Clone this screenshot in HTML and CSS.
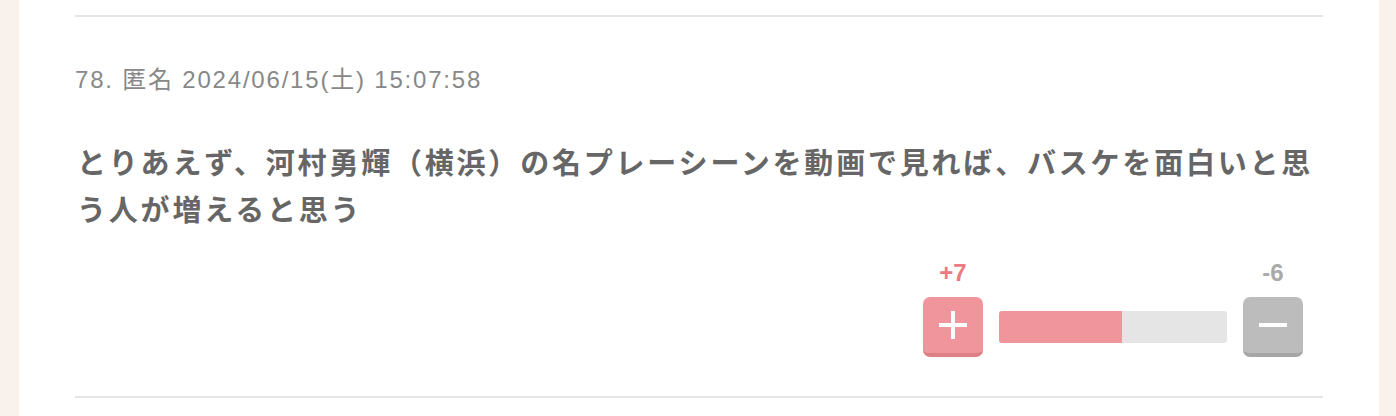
FILE: index.html
```html
<!DOCTYPE html>
<html lang="ja">
<head>
    <meta charset="UTF-8">
    <meta name="viewport" content="width=device-width, initial-scale=1.0">
    <title>コメント</title>
    <link rel="stylesheet" href="styles.css">
</head>
<body>
    <div class="panel">
        <div class="comment">
            <div class="comment-meta">78. 匿名 2024/06/15(土) 15:07:58</div>
            <div class="comment-body">とりあえず、河村勇輝（横浜）の名プレーシーンを動画で見れば、バスケを面白いと思う人が増えると思う</div>

            <div class="vote">
                <div class="vote-side">
                    <div class="vote-count plus">+7</div>
                    <button class="vote-btn plus" aria-label="プラス">
                        <svg width="28" height="28" viewBox="0 0 28 28"><rect x="0" y="12" width="28" height="4" fill="#fff"/><rect x="12" y="0" width="4" height="28" fill="#fff"/></svg>
                    </button>
                </div>
                <div class="vote-bar">
                    <div class="vote-bar-fill" style="width: 53.8%"></div>
                </div>
                <div class="vote-side">
                    <div class="vote-count minus">-6</div>
                    <button class="vote-btn minus" aria-label="マイナス">
                        <svg width="28" height="4" viewBox="0 0 28 4"><rect x="0" y="0" width="28" height="4" fill="#fff"/></svg>
                    </button>
                </div>
            </div>
        </div>
    </div>
</body>
</html>
```

FILE: styles.css
```css
html {
    background-color: #f9f1ec;
}
body {
    margin: 0;
    font-family: "Liberation Sans", "Noto Sans CJK JP", sans-serif;
}
.panel {
    margin: 0 17px 0 19px;
    min-height: 416px;
    padding: 15px 56px 0;
    background-color: #fff;
    box-sizing: border-box;
}
.comment {
    border-top: 2px solid #e5e5e5;
    border-bottom: 2px solid #e5e5e5;
    padding: 48px 0 39px;
}
.comment-meta {
    font-size: 24px;
    line-height: 30px;
    letter-spacing: 1.8px;
    color: #888;
}
.comment-body {
    margin-top: 46px;
    padding-left: 2px;
    font-size: 29px;
    line-height: 47px;
    letter-spacing: 2.8px;
    font-weight: bold;
    color: #666;
}
.vote {
    display: flex;
    justify-content: flex-end;
    align-items: flex-end;
    gap: 16px;
    margin-top: 25px;
    padding-right: 20px;
}
.vote-side {
    display: flex;
    flex-direction: column;
    align-items: center;
    gap: 11px;
}
.vote-count {
    font-size: 24px;
    line-height: 26px;
    font-weight: bold;
}
.vote-count.plus {
    color: #ec7a80;
}
.vote-count.minus {
    color: #aaa;
}
.vote-btn {
    display: flex;
    align-items: center;
    justify-content: center;
    width: 60px;
    height: 60px;
    padding: 0;
    border: none;
    border-bottom: 4px solid;
    border-radius: 7px;
    box-sizing: border-box;
    cursor: pointer;
}
.vote-btn.plus {
    background-color: #f0959b;
    border-bottom-color: #dc8086;
}
.vote-btn.minus {
    background-color: #bcbcbc;
    border-bottom-color: #a6a6a6;
}
.vote-bar {
    width: 228px;
    height: 32px;
    margin-bottom: 14px;
    border-radius: 3px;
    background-color: #e5e5e5;
    overflow: hidden;
}
.vote-bar-fill {
    height: 100%;
    background-color: #f0959b;
}
```
